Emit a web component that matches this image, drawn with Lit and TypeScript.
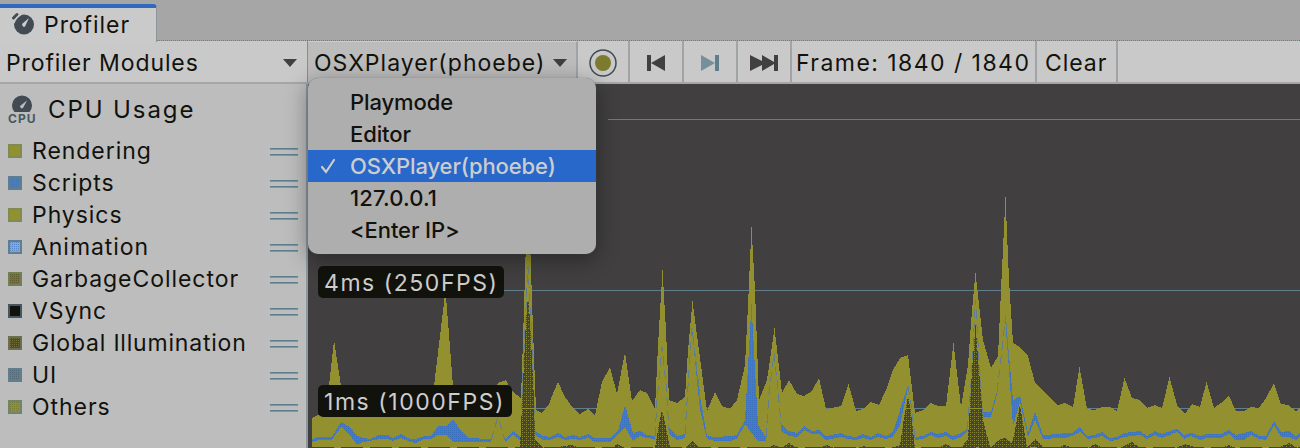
import { LitElement, html, css, svg } from "lit";
import { customElement } from "lit/decorators.js";

type Pt = [number, number];
type Band = [number, number, number];

const TOTAL: Pt[] = [
  [312, 448], [312, 418], [318, 415], [325, 416], [329, 386], [334, 340], [341, 386], [344, 400], [351, 396], [356, 384], [361, 402],
  [378, 398], [400, 404], [420, 400], [430, 400], [434, 386], [445.5, 290], [453, 386], [455, 400], [480, 402], [490, 400], [498, 383],
  [506, 380], [512, 391], [521, 398], [523, 340], [526, 240], [530, 240], [533, 330], [536, 410], [542, 413], [549, 404], [554, 391],
  [558, 382], [565, 397], [573, 408], [580, 414], [588, 409], [595, 415], [602, 382], [610, 367], [617, 394], [625, 352], [632, 401],
  [640, 390], [647, 393], [655, 409], [658, 345], [662.5, 270], [666, 330], [669, 400], [677, 403], [685, 397], [688, 350], [692.5, 301],
  [698, 343], [707, 411], [715, 392], [722, 406], [730, 409], [737, 400], [745, 365], [748, 305], [751.5, 227], [755, 290], [759, 400],
  [767, 380], [774.5, 328], [782, 393], [789, 380], [797, 394], [804, 396], [812, 391], [819, 378], [826, 409], [841, 406], [848.5, 384],
  [856, 411], [863, 409], [871, 402], [879, 405], [886, 390], [893, 370], [900, 358], [908, 355], [915, 413], [923, 410], [931, 403],
  [938, 406], [946, 406], [953.5, 343], [961, 407], [968, 365], [972, 310], [975.5, 273], [983, 340], [991, 368], [998, 356], [1001, 290],
  [1005.5, 197], [1009, 280], [1013, 343], [1020, 347], [1028, 356], [1035, 383], [1043, 390], [1050, 398], [1058, 405], [1065, 403],
  [1073, 407], [1079.5, 367], [1087, 409], [1095, 410], [1102, 407], [1110, 407], [1117, 411], [1124.5, 378], [1132, 398], [1140, 400],
  [1147, 408], [1155, 405], [1162, 408], [1169.5, 377], [1177, 405], [1185, 414], [1192, 404], [1200, 407], [1206.5, 382], [1214, 408],
  [1221, 403], [1229, 396], [1236, 411], [1244, 411], [1251, 407], [1259, 408], [1266, 398], [1274, 383], [1281, 404], [1288, 405],
  [1296, 411], [1300, 408], [1300, 448],
];

const SCRIPTS: Band[][] = [
  [[312, 439, 442], [319, 437, 440], [332, 437, 440], [341, 422, 427], [350, 427, 435], [357, 436, 445], [363, 438, 442], [370, 439, 441],
   [379, 435, 439], [388, 435, 439], [393, 438, 441], [401, 434, 438], [410, 439, 442], [416, 439, 443], [424, 436, 439], [431, 436, 439],
   [438, 426, 435], [446, 426, 435], [453, 419, 442], [461, 431, 442], [468, 438, 442], [490, 439, 442], [491, 439, 441]],
  [[505, 439, 442], [513, 431, 435], [521, 437, 441]],
  [[535, 431, 435], [543, 436, 440], [550, 437, 440], [558, 433, 437], [565, 437, 440], [573, 435, 439], [580, 437, 440], [588, 434, 438],
   [595, 438, 442], [610, 438, 442], [618, 431, 435], [625, 405, 427], [633, 433, 441], [640, 431, 436], [647, 435, 438], [655, 436, 439]],
  [[669, 428, 434], [677, 436, 440], [685, 434, 438]],
  [[692, 327, 329], [696, 366, 371], [700, 396, 410], [707, 436, 439], [715, 437, 441], [730, 436, 441], [737, 435, 439], [745, 420, 424],
   [751.5, 304, 433], [758, 425, 441], [766, 437, 441]],
  [[781, 424, 431], [789, 431, 436], [797, 433, 437], [804, 426, 430], [812, 431, 434], [819, 430, 434], [826, 436, 440], [841, 433, 437],
   [848, 436, 439], [856, 437, 440], [863, 434, 438], [871, 437, 440], [878, 433, 437], [886, 436, 439], [893, 432, 437], [900, 410, 425],
   [908, 385, 388]],
  [[915, 437, 440], [923, 436, 439], [931, 432, 435], [938, 434, 438], [946, 432, 436], [953, 436, 440], [961, 433, 437], [967, 429, 432]],
  [[983, 412, 417], [991, 412, 417], [997, 391, 394]],
  [[1005, 316, 318], [1008, 344, 356], [1013, 400, 426], [1020, 396, 402], [1028, 433, 437], [1035, 412, 420], [1043, 435, 439],
   [1058, 434, 438], [1065, 433, 438], [1072, 433, 436], [1080, 427, 432], [1087, 436, 439], [1095, 435, 438], [1102, 432, 436],
   [1110, 438, 441], [1117, 437, 440], [1124, 433, 437], [1140, 431, 435], [1147, 436, 439], [1155, 431, 435], [1162, 434, 438],
   [1170, 431, 435], [1177, 429, 432], [1184, 435, 439], [1191, 433, 436], [1200, 436, 440], [1207, 434, 438], [1221, 434, 438],
   [1229, 430, 434], [1236, 435, 440], [1244, 433, 440], [1251, 431, 435], [1259, 436, 439], [1266, 436, 440], [1274, 421, 425],
   [1281, 432, 437], [1289, 431, 437], [1296, 436, 440], [1300, 433, 437]],
];

const SPIKES: string[] = [
  "M491 440L498 417L505 440",
  "M521 437L523 370L528 267L532 340L535 431",
  "M655 436L657 400L662 347L666 384L669 430",
  "M685 434L689 370L692 328L700 396",
  "M766 437L769 394L774 353L778 390L781 424",
  "M908 386L911 404L915 438",
  "M967 430L971 384L975.500 300L979 360L983 414",
  "M997 392L1001 358L1005.500 316L1009 360",
];

const IDLE: string[] = [
  "520,448 522,405 526,320 528,296 530,320 534,400 535,440 539,443 543,448",
  "655,448 658,430 662,410 666,427 670,448",
  "685,448 692,441 700,448",
  "891,448 900,445 904,418 908,396 911,412 915,448",
  "961,448 968,439 972,370 975.5,325 979,370 983,420 990,447",
  "990,448 998,440 1005,438 1012,443 1013,440 1020,405 1027,447 1035,439 1043,447",
  "550,448 572,445 580,448", "612,448 617,444 625,448", "782,448 789,443 797,448", "767,448 774,445 782,448",
  "820,448 827,445 834,448", "858,448 863,446 869,448", "938,448 946,444 954,448",
  "1058,448 1064,445 1073,448", "1088,448 1095,444 1103,448", "1120,448 1132,442 1140,448",
  "1176,448 1185,444 1198,448", "1222,448 1229,445 1236,448", "1278,448 1289,443 1298,448",
];

const band = (b: Band[]) =>
  [...b.map(([x, t]) => `${x},${t}`), ...[...b].reverse().map(([x, , y]) => `${x},${y}`)].join(" ");

@customElement("profiler-chart")
class ProfilerChart extends LitElement {
  static styles = css`
    :host { display: block; width: 100%; height: 100%; }
    svg { display: block; width: 100%; height: 100%; }
    .plot { shape-rendering: crispEdges; }
    .grid { stroke: #5f7f8f; stroke-width: 1; fill: none; }
    .spike { stroke: #5f7f8f; stroke-width: 1; fill: none; stroke-dasharray: 9 5; }
    .total { fill: #93902f; }
  `;
  render() {
    return html`<svg class="plot" viewBox="308 84 992 364" preserveAspectRatio="none">
      ${svg`<defs>
        <pattern id="blue" width="2" height="2" patternUnits="userSpaceOnUse">
          <rect width="2" height="2" fill="#567b9c"/><rect width="1" height="1" fill="#3a70bb"/>
        </pattern>
        <pattern id="dark" width="4" height="4" patternUnits="userSpaceOnUse">
          <rect width="4" height="4" fill="#454340"/><rect width="1" height="1" fill="#85823a"/><rect x="2" y="2" width="1" height="1" fill="#85823a"/>
          <rect x="2" y="0" width="1" height="1" fill="#85823a"/>
        </pattern>
      </defs>
      <path class="grid" d="M608 119.500H1300M504 290.500H1300M512 408.500H1300"/>
      <polygon class="total" points=${TOTAL.map((p) => p.join(",")).join(" ")}/>
      ${SCRIPTS.map((b) => svg`<polygon fill="url(#blue)" points=${band(b)}/>`)}
      ${SPIKES.map((d) => svg`<path class="spike" d=${d}/>`)}
      ${IDLE.map((p) => svg`<polygon fill="url(#dark)" points=${p}/>`)}
      <path d="M312 447.500H1300" stroke="#413f40" stroke-dasharray="22 7"/>
      <path d="M522 408.500H535M904 408.500H912M970 408.500H982" stroke="#93902f"/>`}
    </svg>`;
  }
}

const MODULES = [
  { name: "Rendering", base: "#93902f", dot: "#93902f", edge: "#7d8b55" },
  { name: "Scripts", base: "#5a7d96", dot: "#4775ad", edge: "#5f7f8f" },
  { name: "Physics", base: "#93902f", dot: "#93902f", edge: "#7d8b55" },
  { name: "Animation", base: "#98a4b4", dot: "#5a86c8", edge: "#5f7f8f" },
  { name: "GarbageCollector", base: "#77752f", dot: "#5e5b30", edge: "#727f50" },
  { name: "VSync", base: "#12120d", dot: "#12120d", edge: "#465761" },
  { name: "Global Illumination", base: "#4b4a3e", dot: "#6e6c3a", edge: "#696f50" },
  { name: "UI", base: "#5f7f8f", dot: "#536a76", edge: "#5f7f8f" },
  { name: "Others", base: "#93902f", dot: "#7b7a32", edge: "#6f8567" },
];
const TARGETS = ["Playmode", "Editor", "OSXPlayer(phoebe)", "127.0.0.1", "<Enter IP>"];

@customElement("app-root")
class AppRoot extends LitElement {
  static styles = css`
    * { box-sizing: border-box; }
    :host {
      display: flex; flex-direction: column; width: 1300px; height: 448px; overflow: hidden; background: #a6a6a6;
      font: 400 23px/28px Inter, "Liberation Sans", sans-serif; letter-spacing: 0.95px; color: #12120d; white-space: nowrap;
    }
    svg { display: block; flex: none; }
    .tabs { height: 41px; padding-top: 4px; display: flex; flex: none; }
    .tab {
      width: 157px; height: 38px; background: #cacaca; border-top: 4px solid #3069bd; border-right: 1px solid #8b969b;
      border-radius: 0 4px 0 0; display: flex; align-items: center; padding: 0 0 1px 10px; gap: 8px; z-index: 1;
    }
    .rest { flex: 1; height: 37px; border-bottom: 1px dotted #5f7f8f; }
    .bar { height: 43px; flex: none; display: flex; border-bottom: 2px solid #a6a6a6; background: #c9c9c9; }
    .cell { display: flex; align-items: center; border-right: 2px solid #a0a4a6; height: 41px; padding-top: 2px; }
    .center { justify-content: center; }
    .modules { width: 308px; padding-left: 6px; justify-content: space-between; padding-right: 9px; border-right: 1px solid #7d9099; letter-spacing: 0.9px; }
    .player { width: 270px; padding-left: 6px; gap: 7px; background: #bcbcbc; border-top: 1px solid #cdcdcd; padding-top: 1px; letter-spacing: 1.02px; }
    .record { width: 52px; }
    .step { width: 54px; }
    .frame { width: 245px; padding-left: 4px; letter-spacing: 1.45px; }
    .clear { width: 81px; padding-left: 8px; }
    .body { flex: 1; display: grid; grid-template-columns: 308px 1fr; min-height: 0; position: relative; }
    .side { background: #bdbdbd; border-right: 2px solid #8b999f; display: flex; flex-direction: column; }
    .head { height: 51px; display: flex; align-items: center; gap: 11px; padding-left: 7px; font-size: 24px; letter-spacing: 1.9px; flex: none; }
    .cpu { font-size: 12px; font-weight: 700; letter-spacing: 0.5px; fill: #465761; }
    .row { height: 32px; display: flex; align-items: center; padding: 0 8px; gap: 10px; flex: none; }
    .long { letter-spacing: 0.8px; }
    .grip { margin-left: auto; }
    .chart { background: #413f40; min-width: 0; }
    .tag {
      position: absolute; height: 32px; left: 318px; background: #12120d; color: #cdcdcd; border-radius: 5px; padding: 3px 6px;
      letter-spacing: 1.55px;
    }
    .four { top: 182px; width: 186px; }
    .one { top: 301px; width: 194px; }
    .menu {
      position: absolute; left: 308px; top: -6px; width: 288px; height: 176px; border-radius: 10px; background: #aeaeae; padding: 8px 0;
      box-shadow: 0 5px 22px rgba(0,0,0,.38), 0 0 1px #5f7f8f; font-size: 22px; font-weight: 500; letter-spacing: -0.1px; z-index: 3;
    }
    .item { height: 32px; display: flex; align-items: center; padding-left: 12px; }
    .ip { letter-spacing: 0.15px; }
    .tick { width: 30px; display: flex; }
    .on { background: #2868cb; color: #cdcdcd; }
  `;

  private arrow() {
    return html`<svg width="16" height="10"><path d="M1 1H15L8 9Z" fill="#413f40" /></svg>`;
  }

  render() {
    return html`
      <div class="tabs">
        <div class="tab">
          <svg width="26" height="26" viewBox="0 0 26 26">
            <circle cx="14" cy="12.500" r="10" fill="#414b51" />
            <path d="M3.500 6L7 2.500" stroke="#414b51" stroke-width="3" stroke-linecap="round" />
            <path d="M4 11Q6 5 11 2.500" stroke="#cacaca" stroke-width="1.400" fill="none" />
            <path d="M12 12L19 6L15 14.500Q12.500 16 12 12Z" fill="#cdcdcd" />
          </svg>
          <span>Profiler</span>
        </div>
        <div class="rest"></div>
      </div>
      <div class="bar">
        <div class="cell modules"><span>Profiler Modules</span>${this.arrow()}</div>
        <div class="cell player"><span>OSXPlayer(phoebe)</span>${this.arrow()}</div>
        <div class="cell center record">
          <svg width="30" height="30"><circle cx="15" cy="15" r="13" fill="none" stroke="#414b51" stroke-width="1.500" /><circle cx="15" cy="15" r="8" fill="#7d7b30" /></svg>
        </div>
        <div class="cell center step">
          <svg width="18" height="16"><path d="M0 0H4V16H0ZM18 0V16L4 8Z" fill="#413f40" /></svg>
        </div>
        <div class="cell center step">
          <svg width="18" height="16"><path d="M0 0L14 8L0 16Z" fill="#76909b" /><path d="M14 0H18V16H14Z" fill="#5f7f8f" /></svg>
        </div>
        <div class="cell center step">
          <svg width="28" height="16"><path d="M0 0L12 6V0L24 7V0H28V16H24V9L12 16V10L0 16Z" fill="#413f40" /></svg>
        </div>
        <div class="cell frame">Frame: 1840 / 1840</div>
        <div class="cell clear">Clear</div>
      </div>
      <div class="body">
        <div class="side">
          <div class="head">
            <svg width="30" height="32" viewBox="0 0 30 32">
              <path d="M7.500 18A10 10 0 1 1 22.500 18Z" fill="#414b51" />
              <path d="M13 12L20 6.500L16 14Q13.500 15.500 13 12Z" fill="#bdbdbd" />
              <text class="cpu" x="1" y="29" textLength="28">CPU</text>
            </svg>
            <span>CPU Usage</span>
          </div>
          ${MODULES.map(
            (m, i) => html`<div class="row">
              <svg width="14" height="14">
                <defs><pattern id="p${i}" width="2" height="2" patternUnits="userSpaceOnUse"><rect width="2" height="2" fill=${m.base} /><rect width="1" height="1" fill=${m.dot} /></pattern></defs>
                <rect width="14" height="14" fill=${m.edge} /><rect x="2" y="2" width="10" height="10" fill="url(#p${i})" />
              </svg>
              <span class=${m.name.length > 17 ? "long" : ""}>${m.name}</span>
              <svg class="grip" width="28" height="10"><path d="M0 2.500H28M0 8.500H28" stroke="#5f7f8f" /><path d="M0 3.500H28M0 9.500H28" stroke="#7f959f" /></svg>
            </div>`
          )}
        </div>
        <div class="chart"><profiler-chart></profiler-chart></div>
        <div class="tag four">4ms (250FPS)</div>
        <div class="tag one">1ms (1000FPS)</div>
        <div class="menu">
          ${TARGETS.map(
            (t, i) => html`<div class="item ${i === 2 ? "on" : ""} ${i === 3 ? "ip" : ""}">
              <span class="tick">${i === 2
                ? html`<svg width="17" height="17"><path d="M2 9L6 14L14 2" fill="none" stroke="#cdcdcd" stroke-width="2.200" stroke-linecap="round" /></svg>`
                : ""}</span><span>${t}</span>
            </div>`
          )}
        </div>
      </div>
    `;
  }
}
